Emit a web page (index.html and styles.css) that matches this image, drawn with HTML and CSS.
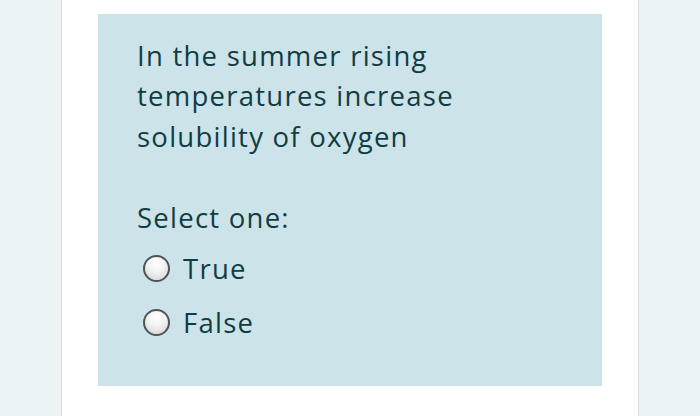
FILE: index.html
```html
<!DOCTYPE html>
<html>
<head>
<meta charset="utf-8">
<link rel="stylesheet" href="styles.css">
</head>
<body>
<div class="page">
  <div class="side"></div>
  <main class="main">
    <section class="question">
      <p class="qtext">In the summer rising<br>temperatures increase<br>solubility of oxygen</p>
      <p class="prompt">Select one:</p>
      <div class="answers">
        <label class="option"><span class="radio"></span><span class="label">True</span></label>
        <label class="option"><span class="radio"></span><span class="label">False</span></label>
      </div>
    </section>
  </main>
  <div class="side"></div>
</div>
</body>
</html>
```

FILE: styles.css
```css
html, body {
  margin: 0;
  padding: 0;
  height: 100%;
}
body {
  background: #ebf3f7;
  font-family: "Open Sans", "Lato", sans-serif;
  color: #123c44;
  overflow: hidden;
}
.page {
  display: flex;
  height: 416px;
}
.side {
  flex: 1;
  background: #ebf3f7;
}
.main {
  box-sizing: border-box;
  width: 578px;
  flex: none;
  background: #ffffff;
  border-left: 1px solid #dadcdd;
  border-right: 1px solid #dadcdd;
  padding: 14px 36px 0 36px;
}
.question {
  background: #cce4e9;
  height: 372px;
  box-sizing: border-box;
  padding: 21.5px 20px 0 39px;
}
.qtext,
.prompt,
.option {
  font-size: 27.5px;
  font-weight: 500;
  letter-spacing: 1.25px;
}
.qtext {
  margin: 0;
  line-height: 40.5px;
}
.prompt {
  margin: 40.5px 0 0 0;
  line-height: 40.5px;
}
.answers {
  display: flex;
  flex-direction: column;
  gap: 14px;
  margin-top: 10.5px;
  padding-left: 6px;
}
.option {
  display: flex;
  align-items: center;
  gap: 13px;
  line-height: 40px;
}
.radio {
  width: 23px;
  height: 23px;
  border-radius: 50%;
  border: 2px solid #4f5457;
  background: radial-gradient(circle at 50% 30%, #ffffff 0%, #f3f3f3 40%, #cdd0d2 100%);
  flex: none;
}
```
